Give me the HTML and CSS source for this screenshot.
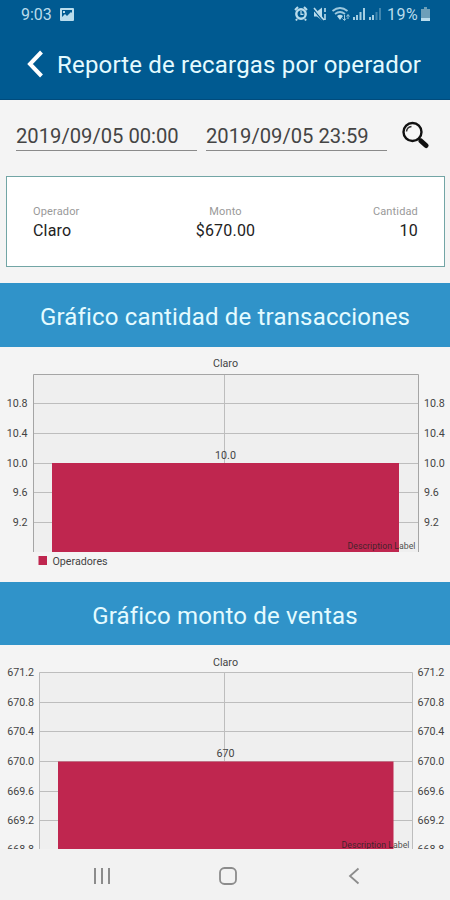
FILE: index.html
```html
<!DOCTYPE html>
<html lang="es">
<head>
    <meta charset="UTF-8">
    <meta name="viewport" content="width=device-width, initial-scale=1.0">
    <title>Reporte de recargas por operador</title>
    <link rel="stylesheet" href="styles.css">
</head>
<body>
    <header class="header">
        <div class="status-bar">
            <div class="status-left">
                <span>9:03</span>
                <svg width="14" height="13" viewBox="0 0 14 13">
                    <path fill="#b9dcec" fill-rule="evenodd" d="M1 0h12a1 1 0 0 1 1 1v11a1 1 0 0 1-1 1H1a1 1 0 0 1-1-1V1a1 1 0 0 1 1-1zM2 2v7l3-3 2 2 4-4 1 1V2zM3 3h2v2H3z"/>
                </svg>
            </div>
            <div class="status-right">
                <svg width="88" height="16" viewBox="0 0 88 16" class="status-icons">
                    <!-- alarm -->
                    <path d="M1 4l3-3M13 4l-3-3M3 13l-1 1.500M11 13l1 1.500" stroke="#b9dcec" stroke-width="2"/>
                    <circle cx="7" cy="8" r="4.700" fill="none" stroke="#b9dcec" stroke-width="2.400"/>
                    <path d="M7 5v3.300h2.500" fill="none" stroke="#b9dcec" stroke-width="1.200"/>
                    <!-- muted -->
                    <path d="M20 5.500h3l5-4v13l-5-4h-3z" fill="#b9dcec"/>
                    <path d="M19 3l10 12" stroke="#005a91" stroke-width="1.200"/>
                    <path d="M20 2l10 12M31 2v4M31 8v6" stroke="#b9dcec" stroke-width="1.600"/>
                    <!-- wifi -->
                    <path d="M38.500 5q7.500-6 15 0M41 8q5-4 10 0" fill="none" stroke="#9cc8de" stroke-width="1.800"/>
                    <path d="M43 10q3-2.500 6 0l-3 4z" fill="#b9dcec"/>
                    <path d="M50.500 9v5M54 9v4M48.500 12.500l2 2 1.500-2M52.500 10.500l1.500-2 1.500 2" fill="none" stroke="#9cc8de"/>
                    <!-- signals -->
                    <path d="M60 14v-3M63 14v-5M66.500 14v-8M70 14v-12" stroke="#a5cee2" stroke-width="2"/>
                    <path d="M76 14v-3M79 14v-5" stroke="#a5cee2" stroke-width="2"/>
                    <path d="M82.500 14v-8M86 14v-12" stroke="#4286ae" stroke-width="2"/>
                </svg>
                <span class="battery-text">19%</span>
                <svg width="9" height="14" viewBox="0 0 9 14">
                    <path d="M3 0h3v2h3v9H0V2h3z" fill="#6d9fb9"/>
                    <path d="M0 11h9v3H0z" fill="#b9dcec"/>
                </svg>
            </div>
        </div>
        <div class="toolbar">
            <svg width="16" height="28" viewBox="0 0 16 28" class="back">
                <path d="M14.500 2L3 14l11.500 12" fill="none" stroke="#fff" stroke-width="4"/>
            </svg>
            <h1 class="title">Reporte de recargas por operador</h1>
        </div>
    </header>

    <main class="content">
        <div class="filters">
            <div class="date">2019/09/05 00:00</div>
            <div class="date">2019/09/05 23:59</div>
            <svg width="28" height="28" viewBox="0 0 28 28" class="search">
                <circle cx="11.500" cy="11" r="9" fill="#f8f8f8" stroke="#111" stroke-width="2.400"/>
                <path d="M5.500 10.500q.5-4.500 5-5" fill="none" stroke="#333" stroke-width="1.500"/>
                <path d="M17.500 17l3 3" stroke="#111" stroke-width="2"/>
                <path d="M20 20l5 4.500" stroke="#111" stroke-width="5" stroke-linecap="round"/>
            </svg>
        </div>

        <div class="card">
            <div class="field">
                <span class="label">Operador</span>
                <span class="value">Claro</span>
            </div>
            <div class="field center">
                <span class="label">Monto</span>
                <span class="value">$670.00</span>
            </div>
            <div class="field right">
                <span class="label">Cantidad</span>
                <span class="value">10</span>
            </div>
        </div>

        <h2 class="band">Gráfico cantidad de transacciones</h2>
        <svg class="chart" width="450" height="235" viewBox="0 0 450 235">
            <rect x="33" y="27" width="385" height="178" class="plot"/>
            <path class="grid" d="M33 56.500h385M33 86.500h385M33 116.500h385M33 145.500h385M33 175.500h385M224.500 27v89"/>
            <path class="axis" d="M33.500 205V27.500H418.500V205"/>
            <rect x="52" y="116" width="347" height="89" class="bar"/>
            <g class="tick left">
                <text x="27.500" y="60">10.8</text>
                <text x="27.500" y="90">10.4</text>
                <text x="27.500" y="120">10.0</text>
                <text x="27.500" y="149">9.6</text>
                <text x="27.500" y="179">9.2</text>
            </g>
            <g class="tick">
                <text x="424" y="60">10.8</text>
                <text x="424" y="90">10.4</text>
                <text x="424" y="120">10.0</text>
                <text x="424" y="149">9.6</text>
                <text x="424" y="179">9.2</text>
            </g>
            <text x="225.500" y="20" class="tick middle">Claro</text>
            <text x="225.500" y="111.500" class="tick middle">10.0</text>
            <text x="415.500" y="202" class="description">Description Label</text>
            <rect x="38.500" y="209" width="8.500" height="9" class="bar"/>
            <text x="52.500" y="218" class="tick">Operadores</text>
        </svg>

        <h2 class="band band-low">Gráfico monto de ventas</h2>
        <svg class="chart" width="450" height="204" viewBox="0 0 450 204">
            <rect x="39" y="27" width="373" height="177" class="plot"/>
            <path class="grid" d="M39 57.500h373M39 86.500h373M39 116.500h373M39 146.500h373M39 175.500h373M224.500 27v89"/>
            <path class="axis light" d="M39.500 204V27.500H412.500V204"/>
            <rect x="58" y="116.500" width="335.500" height="88" class="bar"/>
            <g class="tick left">
                <text x="34" y="31">671.2</text>
                <text x="34" y="60.500">670.8</text>
                <text x="34" y="90">670.4</text>
                <text x="34" y="120">670.0</text>
                <text x="34" y="149.500">669.6</text>
                <text x="34" y="179">669.2</text>
                <text x="34" y="208">668.8</text>
            </g>
            <g class="tick">
                <text x="417.500" y="31">671.2</text>
                <text x="417.500" y="60.500">670.8</text>
                <text x="417.500" y="90">670.4</text>
                <text x="417.500" y="120">670.0</text>
                <text x="417.500" y="149.500">669.6</text>
                <text x="417.500" y="179">669.2</text>
                <text x="417.500" y="208">668.8</text>
            </g>
            <text x="225.500" y="21" class="tick middle">Claro</text>
            <text x="225.500" y="112" class="tick middle">670</text>
            <text x="409.500" y="203" class="description">Description Label</text>
        </svg>
    </main>

    <nav class="nav">
        <svg width="18" height="18" viewBox="0 0 18 18">
            <path d="M2 1v16M9 1v16M16 1v16" stroke="#8c8c8c" stroke-width="2"/>
        </svg>
        <svg width="18" height="18" viewBox="0 0 18 18">
            <rect x="1" y="1" width="16" height="16" rx="4.500" fill="none" stroke="#8c8c8c" stroke-width="1.800"/>
        </svg>
        <svg width="18" height="18" viewBox="0 0 18 18">
            <path d="M13.500 1.500L5 9l8.500 7.500" fill="none" stroke="#8c8c8c" stroke-width="1.800"/>
        </svg>
    </nav>
</body>
</html>
```
FILE: styles.css
```css
* {
    margin: 0;
    padding: 0;
    box-sizing: border-box;
}

body {
    width: 450px;
    height: 900px;
    overflow: hidden;
    display: flex;
    flex-direction: column;
    background: #f4f4f4;
    font-family: Roboto, sans-serif;
}

svg {
    display: block;
    flex: none;
}

.header {
    height: 100px;
    background: #005a91;
    border-bottom: 1px solid #004b7c;
}

.status-bar {
    height: 28px;
    padding: 0 20px 0 21px;
    display: flex;
    justify-content: space-between;
    align-items: center;
    color: #b9dcec;
    font-size: 16px;
}

.status-left,
.status-right {
    display: flex;
    align-items: center;
}

.status-left {
    gap: 8px;
}

.status-icons {
    margin-right: 5px;
}

.battery-text {
    margin-right: 3px;
    letter-spacing: 0.4px;
}

.toolbar {
    height: 72px;
    padding-left: 27px;
    display: flex;
    align-items: center;
}

.back {
    margin-right: 14px;
}

.title {
    padding-top: 2px;
    font-size: 24px;
    font-weight: 400;
    letter-spacing: 0.18px;
    color: #e4fbff;
    white-space: nowrap;
}

.content {
    height: 749px;
    overflow: hidden;
}

.filters {
    height: 76px;
    padding: 21px 21px 0 16px;
    display: flex;
    align-items: flex-start;
}

.date {
    width: 181px;
    height: 30px;
    margin-right: 9px;
    border-bottom: 1px solid #8a8a8a;
    font-size: 20.2px;
    line-height: 30px;
    color: #444;
    white-space: nowrap;
}

.search {
    margin-left: 5px;
}

.card {
    height: 91px;
    margin: 0 5px 16px 6px;
    padding: 28px 26px 0 26px;
    display: grid;
    grid-template-columns: 1fr 1fr 1fr;
    background: #fff;
    border: 1px solid #72a5a5;
}

.field {
    display: flex;
    flex-direction: column;
}

.center {
    align-items: center;
}

.right {
    align-items: flex-end;
}

.label {
    font-size: 11px;
    line-height: 14px;
    letter-spacing: 0.15px;
    color: #999;
}

.value {
    font-size: 16px;
    line-height: 23px;
    letter-spacing: 0.2px;
    color: #222;
}

.band {
    height: 64px;
    background: #3093c9;
    color: #e4fbff;
    font-size: 24px;
    font-weight: 400;
    line-height: 68px;
    letter-spacing: 0.17px;
    text-align: center;
}

.band-low {
    height: 63px;
}

.plot {
    fill: #efefef;
}

.grid {
    fill: none;
    stroke: #bdbdbd;
}

.axis {
    fill: none;
    stroke: #a5a5a5;
}

.light {
    stroke: #bdbdbd;
}

.bar {
    fill: #bf264f;
}

.tick {
    font-size: 10.7px;
    fill: #444;
}

.left {
    text-anchor: end;
}

.middle {
    text-anchor: middle;
}

.description {
    font-size: 8.8px;
    text-anchor: end;
    fill: #222;
    fill-opacity: 0.8;
}

.nav {
    height: 51px;
    padding: 3px 87px 0 93px;
    display: flex;
    justify-content: space-between;
    align-items: center;
    background: #f2f2f2;
}
```
